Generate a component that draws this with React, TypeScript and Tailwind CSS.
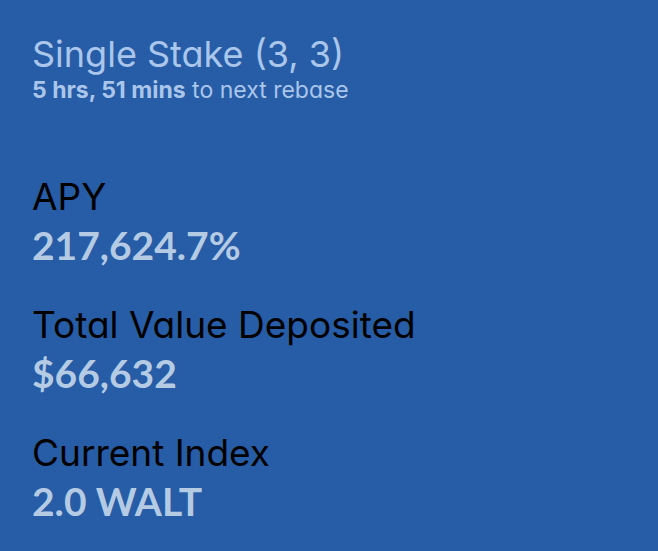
const stats = [
  { label: "APY", value: "217,624.7%" },
  { label: "Total Value Deposited", value: "$66,632" },
  { label: "Current Index", value: "2.0 WALT" },
];

export default function App() {
  return (
    <main className="min-h-screen bg-[#275ca6] px-8 pt-8 font-['Inter',sans-serif] text-[#aac6ea] [font-feature-settings:'cv11']">
      <header>
        <h1 className="text-[36px] leading-[44px]">Single Stake (3, 3)</h1>
        <p className="text-[23px] leading-7">
          <strong className="font-bold">5 hrs, 51 mins</strong> to next rebase
        </p>
      </header>
      <dl className="mt-[69px] flex flex-col gap-8">
        {stats.map(({ label, value }) => (
          <div key={label}>
            <dt className="text-[37px] leading-[48px] text-black">{label}</dt>
            <dd className="font-['Lato',sans-serif] text-[39px] leading-[48px] font-bold text-[#b5cbe4]">{value}</dd>
          </div>
        ))}
      </dl>
    </main>
  );
}
